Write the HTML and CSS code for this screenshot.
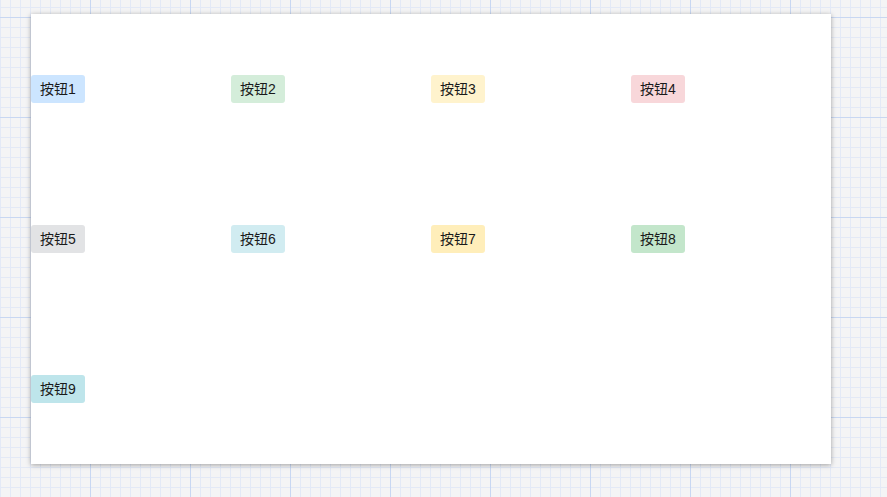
FILE: index.html
```
<!DOCTYPE html>
<html lang="zh-CN">
<head>
    <meta charset="UTF-8">
    <meta name="viewport" content="width=device-width, initial-scale=1.0">
    <title>按钮布局</title>
    <link rel="stylesheet" href="styles.css">
</head>
<body>
    <div class="canvas">
        <div class="cell"><span class="btn btn-1">按钮1</span></div>
        <div class="cell"><span class="btn btn-2">按钮2</span></div>
        <div class="cell"><span class="btn btn-3">按钮3</span></div>
        <div class="cell"><span class="btn btn-4">按钮4</span></div>
        <div class="cell"><span class="btn btn-5">按钮5</span></div>
        <div class="cell"><span class="btn btn-6">按钮6</span></div>
        <div class="cell"><span class="btn btn-7">按钮7</span></div>
        <div class="cell"><span class="btn btn-8">按钮8</span></div>
        <div class="cell"><span class="btn btn-9">按钮9</span></div>
    </div>
</body>
</html>
```

FILE: styles.css
```
* {
    margin: 0;
    padding: 0;
    box-sizing: border-box;
}

body {
    font-family: "Liberation Sans", "Noto Sans CJK SC", sans-serif;
    background-color: #f4f4f5;
    /* paper grid: major lines every 100px, minor every 10px */
    background-image:
        linear-gradient(#c8d7f2 1px, transparent 1px),
        linear-gradient(90deg, #c8d7f2 1px, transparent 1px),
        linear-gradient(#e3e9f6 1px, transparent 1px),
        linear-gradient(90deg, #e3e9f6 1px, transparent 1px);
    background-size: 100px 100px, 100px 100px, 10px 10px, 10px 10px;
    background-position: 0 17px, 90px 0, 0 7px, 0 0;
    height: 100vh;
    padding: 14px 0 0 31px;
}

.canvas {
    width: 800px;
    height: 450px;
    background: #fff;
    box-shadow: 0 1px 5px rgba(0, 0, 0, 0.35);
    display: grid;
    grid-template-columns: repeat(4, 200px);
    grid-template-rows: repeat(3, 150px);
}

.cell {
    display: flex;
    align-items: center;
    justify-content: flex-start;
}

.btn {
    display: inline-block;
    height: 28px;
    line-height: 28px;
    padding: 0 9px;
    border-radius: 3px;
    font-size: 14px;
    color: #1a1a1a;
}

.btn-1 { background: #cce5ff; }
.btn-2 { background: #d4edda; }
.btn-3 { background: #fff3cd; }
.btn-4 { background: #f8d7da; }
.btn-5 { background: #e2e3e5; }
.btn-6 { background: #d1ecf1; }
.btn-7 { background: #ffeeba; }
.btn-8 { background: #c3e6cb; }
.btn-9 { background: #bee5eb; }
```
